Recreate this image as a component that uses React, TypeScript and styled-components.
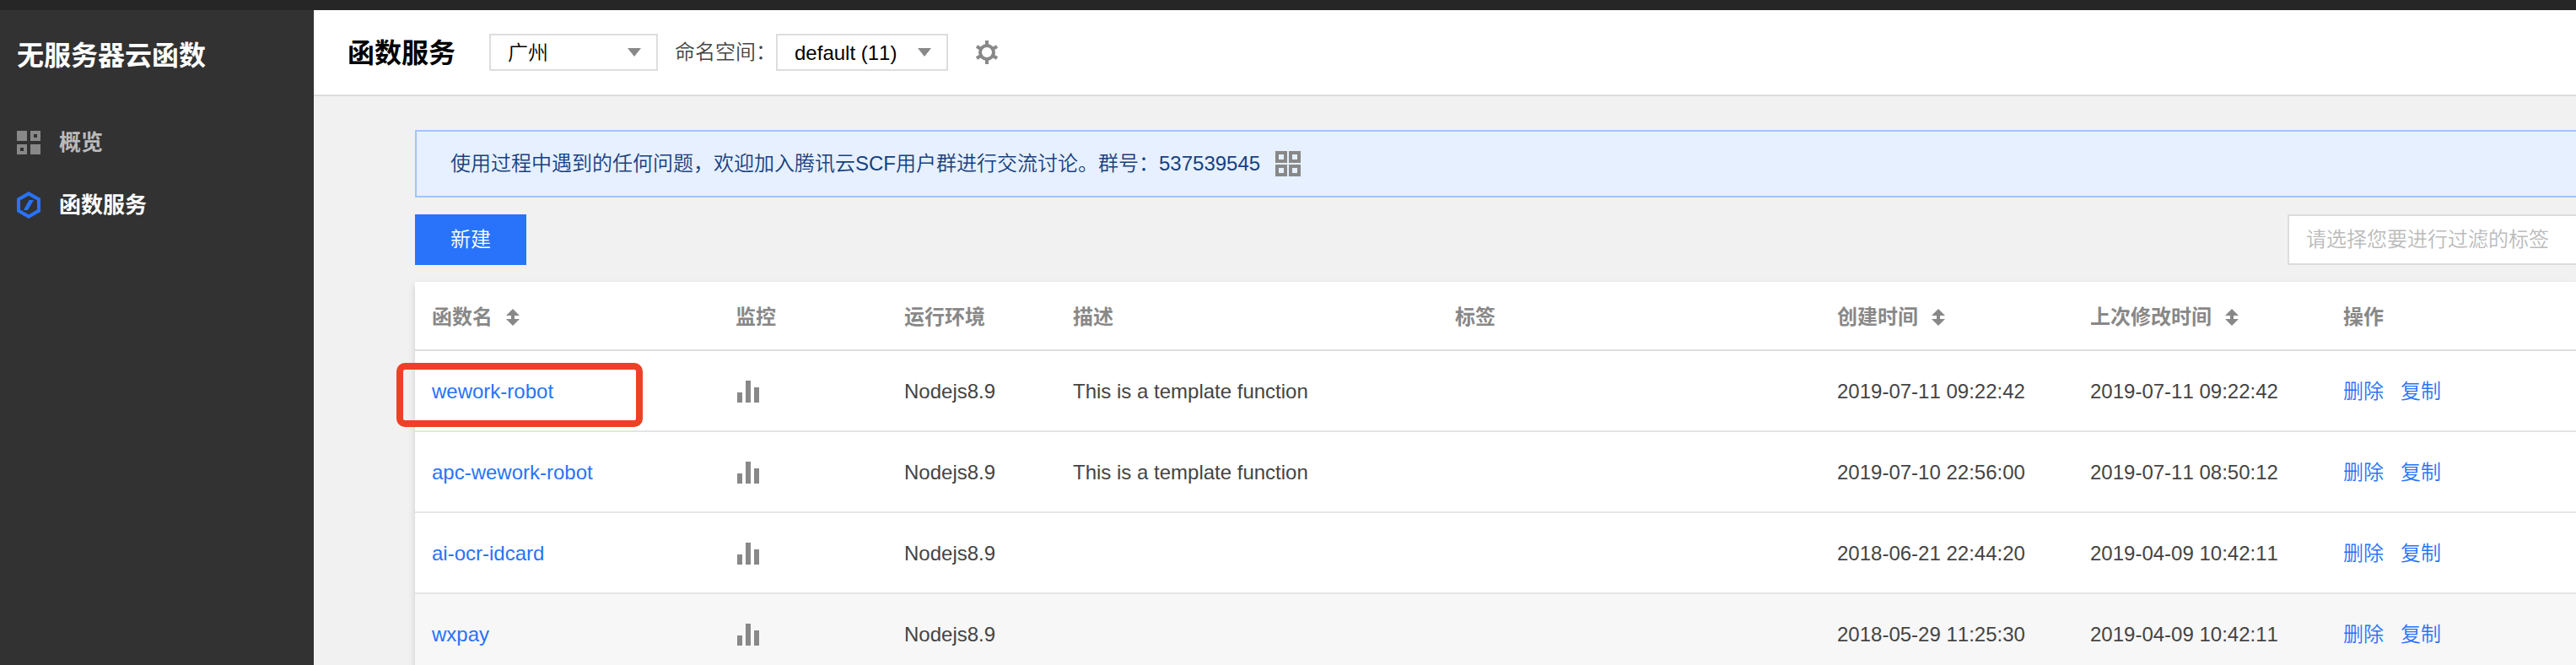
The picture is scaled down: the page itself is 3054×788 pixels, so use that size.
import React from "react";
import styled, { createGlobalStyle } from "styled-components";

const GlobalStyle = createGlobalStyle`
  *, *::before, *::after { box-sizing: border-box; }
  body {
    margin: 0;
    background: #f1f1f1;
    color: #444;
    font-family: "Liberation Sans", "Noto Sans CJK SC", sans-serif;
    font-size: 24px;
    font-weight: 350;
    font-kerning: none;
    line-height: 36px;
  }
  button, input, select { font: inherit; }
  a { text-decoration: none; }
`;

const Shell = styled.div`
  display: flex;
  flex-direction: column;
  height: 100vh;
  overflow: hidden;
`;

const TopBar = styled.div`
  flex: none;
  height: 12px;
  background: #262626;
`;

const Body = styled.div`
  display: flex;
  flex: 1;
  min-height: 0;
`;

const Sidebar = styled.aside`
  flex: none;
  width: 372px;
  padding: 30px 20px;
  background: #323232;
`;

const SidebarTitle = styled.h2`
  margin: 0 0 42px;
  color: #fff;
  font-size: 32px;
  line-height: 48px;
`;

const NavLink = styled.a<{ $active?: boolean }>`
  display: flex;
  align-items: center;
  gap: 22px;
  height: 74px;
  color: ${(p) => (p.$active ? "#fff" : "#bbb")};
  font-size: 26px;
  font-weight: bold;
`;

const Main = styled.main`
  flex: 1;
  min-width: 0;
  overflow: hidden;
`;

const Header = styled.header`
  display: flex;
  align-items: center;
  height: 102px;
  padding: 0 40px;
  border-bottom: 2px solid #ddd;
  background: #fff;
`;

const PageTitle = styled.h1`
  margin: 0 40px 0 0;
  padding-top: 2px;
  color: #000;
  font-size: 32px;
  line-height: 48px;
`;

const SelectWrap = styled.span<{ $width: number }>`
  display: grid;
  align-items: center;
  justify-items: end;
  width: ${(p) => p.$width}px;
  height: 44px;

  > * { grid-area: 1 / 1; }
  > svg { margin-right: 20px; pointer-events: none; }
`;

const Select = styled.select`
  appearance: none;
  width: 100%;
  height: 44px;
  padding: 2px 20px 0;
  border: 2px solid #ddd;
  border-radius: 0;
  background: #fff;
  color: #000;
  line-height: 36px;
`;

const NamespaceLabel = styled.label`
  width: 120px;
  margin-left: 20px;
  white-space: nowrap;
`;

const IconButton = styled.button`
  display: flex;
  margin-left: 32px;
  padding: 0;
  border: 0;
  background: none;
`;

const Content = styled.div`
  display: flex;
  flex-direction: column;
  gap: 20px;
  padding: 40px 0 0 120px;
`;

const Notice = styled.div`
  display: flex;
  align-items: center;
  gap: 18px;
  height: 80px;
  padding: 0 40px;
  border: 2px solid #9fc6fb;
  border-right: 0;
  background: #e6f0ff;
  color: #17407f;
`;

const Toolbar = styled.div`
  display: flex;
  justify-content: space-between;
`;

const CreateButton = styled.button`
  width: 132px;
  height: 60px;
  padding: 0;
  border: 0;
  background: #2873f9;
  color: #fff;
`;

const FilterInput = styled.input`
  width: 342px;
  height: 60px;
  padding: 0 20px;
  border: 2px solid #ddd;
  border-right: 0;
  border-radius: 0;
  background: #fff;

  &::placeholder { color: #bbb; opacity: 1; }
`;

const Table = styled.table`
  width: 100%;
  table-layout: fixed;
  border-collapse: separate;
  border-spacing: 0;
  background: #fff;
  box-shadow: 0 4px 8px rgba(0, 0, 0, 0.15);
`;

const HeadCell = styled.th<{ $width?: number }>`
  width: ${(p) => (p.$width ? `${p.$width}px` : "auto")};
  height: 82px;
  padding: 4px 20px 0;
  border-bottom: 2px solid #ddd;
  color: #888;
  text-align: left;
  white-space: nowrap;
`;

const HeadLabel = styled.span`
  display: flex;
  align-items: center;
  gap: 16px;
`;

const Row = styled.tr<{ $hovered?: boolean }>`
  background: ${(p) => (p.$hovered ? "#f7f7f7" : "#fff")};
`;

const Cell = styled.td`
  position: relative;
  height: 96px;
  padding: 2px 20px 0;
  border-bottom: 2px solid #e5e5e5;
  white-space: nowrap;

  > svg { display: block; }
`;

const Link = styled.a`
  color: #2873f9;
`;

const Actions = styled.span`
  display: flex;
  gap: 20px;
`;

const Highlight = styled.span`
  position: absolute;
  top: 14px;
  left: -22px;
  width: 292px;
  height: 76px;
  border: 8px solid #ef4026;
  border-radius: 10px;
  pointer-events: none;
`;

const OverviewIcon = () => (
  <svg width="28" height="28" viewBox="0 0 28 28" fill="#888" fillRule="evenodd">
    <path d="M0 0h12v12H0zM16 0h12v12H16zM20 4v4h4V4zM0 16h12v12H0zM4 20v4h4v-4zM16 16h12v12H16z" />
  </svg>
);

const FunctionIcon = () => (
  <svg width="28" height="32" viewBox="0 0 28 32" fill="#2873f9" fillRule="evenodd">
    <path d="M14 0 28 8v16l-14 8L0 24V8zM14 4.8 4 10.4v11.2l10 5.6 10-5.6V10.4z" />
    <path d="M14.5 10H20l-7 12H8z" />
  </svg>
);

const CaretIcon = () => (
  <svg width="16" height="10" viewBox="0 0 16 10" fill="#888">
    <path d="M0 0h16L8 10z" />
  </svg>
);

const GearIcon = () => (
  <svg width="28" height="28" viewBox="0 0 28 28">
    <circle cx="14" cy="14" r="8" fill="none" stroke="#888" strokeWidth="4" />
    <path
      d="M14 0v6M14 22v6M1.9 7l5.2 3M20.9 18l5.2 3M1.9 21l5.2-3M20.9 10l5.2-3"
      stroke="#888"
      strokeWidth="4"
    />
  </svg>
);

const QrIcon = () => (
  <svg width="30" height="30" viewBox="0 0 30 30" fill="none" stroke="#888" strokeWidth="4">
    <path d="M2 2h10v10H2zM18 2h10v10H18zM2 18h10v10H2zM18 18h10v10H18z" />
  </svg>
);

const SortIcon = () => (
  <svg width="16" height="20" viewBox="0 0 16 20" fill="#888">
    <path d="M8 0l8 8h-6v4h6l-8 8-8-8h6V8H0z" />
  </svg>
);

const ChartIcon = () => (
  <svg width="28" height="26" viewBox="0 0 28 26" fill="#888">
    <path d="M2 14h6v12H2zM12 0h6v26h-6zM22 8h6v18h-6z" />
  </svg>
);

type Column = { title: string; width?: number; sortable?: boolean };

const columns: Column[] = [
  { title: "函数名", width: 360, sortable: true },
  { title: "监控", width: 200 },
  { title: "运行环境", width: 200 },
  { title: "描述" },
  { title: "标签" },
  { title: "创建时间", width: 300, sortable: true },
  { title: "上次修改时间", width: 300, sortable: true },
  { title: "操作", width: 296 },
];

type Fn = {
  name: string;
  description?: string;
  created: string;
  modified: string;
  marked?: boolean;
  hovered?: boolean;
};

const functions: Fn[] = [
  {
    name: "wework-robot",
    description: "This is a template function",
    created: "2019-07-11 09:22:42",
    modified: "2019-07-11 09:22:42",
    marked: true,
  },
  {
    name: "apc-wework-robot",
    description: "This is a template function",
    created: "2019-07-10 22:56:00",
    modified: "2019-07-11 08:50:12",
  },
  { name: "ai-ocr-idcard", created: "2018-06-21 22:44:20", modified: "2019-04-09 10:42:11" },
  { name: "wxpay", created: "2018-05-29 11:25:30", modified: "2019-04-09 10:42:11", hovered: true },
];

export default function App() {
  return (
    <>
      <GlobalStyle />
      <Shell>
        <TopBar />
        <Body>
          <Sidebar>
            <SidebarTitle>无服务器云函数</SidebarTitle>
            <nav>
              <NavLink href="#overview">
                <OverviewIcon />
                概览
              </NavLink>
              <NavLink href="#functions" $active aria-current="page">
                <FunctionIcon />
                函数服务
              </NavLink>
            </nav>
          </Sidebar>
          <Main>
            <Header>
              <PageTitle>函数服务</PageTitle>
              <SelectWrap $width={200}>
                <Select aria-label="地域">
                  <option>广州</option>
                </Select>
                <CaretIcon />
              </SelectWrap>
              <NamespaceLabel htmlFor="namespace">命名空间：</NamespaceLabel>
              <SelectWrap $width={204}>
                <Select id="namespace">
                  <option>default (11)</option>
                </Select>
                <CaretIcon />
              </SelectWrap>
              <IconButton type="button" aria-label="设置">
                <GearIcon />
              </IconButton>
            </Header>
            <Content>
              <Notice>
                <span>使用过程中遇到的任何问题，欢迎加入腾讯云SCF用户群进行交流讨论。群号：537539545</span>
                <QrIcon />
              </Notice>
              <Toolbar>
                <CreateButton type="button">新建</CreateButton>
                <FilterInput aria-label="标签过滤" placeholder="请选择您要进行过滤的标签" />
              </Toolbar>
              <Table>
                <thead>
                  <tr>
                    {columns.map((c) => (
                      <HeadCell key={c.title} $width={c.width} scope="col">
                        <HeadLabel>
                          {c.title}
                          {c.sortable && <SortIcon />}
                        </HeadLabel>
                      </HeadCell>
                    ))}
                  </tr>
                </thead>
                <tbody>
                  {functions.map((f) => (
                    <Row key={f.name} $hovered={f.hovered}>
                      <Cell>
                        <Link href={`#${f.name}`}>{f.name}</Link>
                        {f.marked && <Highlight />}
                      </Cell>
                      <Cell>
                        <ChartIcon />
                      </Cell>
                      <Cell>Nodejs8.9</Cell>
                      <Cell>{f.description}</Cell>
                      <Cell />
                      <Cell>{f.created}</Cell>
                      <Cell>{f.modified}</Cell>
                      <Cell>
                        <Actions>
                          <Link href="#delete">删除</Link>
                          <Link href="#copy">复制</Link>
                        </Actions>
                      </Cell>
                    </Row>
                  ))}
                </tbody>
              </Table>
            </Content>
          </Main>
        </Body>
      </Shell>
    </>
  );
}
